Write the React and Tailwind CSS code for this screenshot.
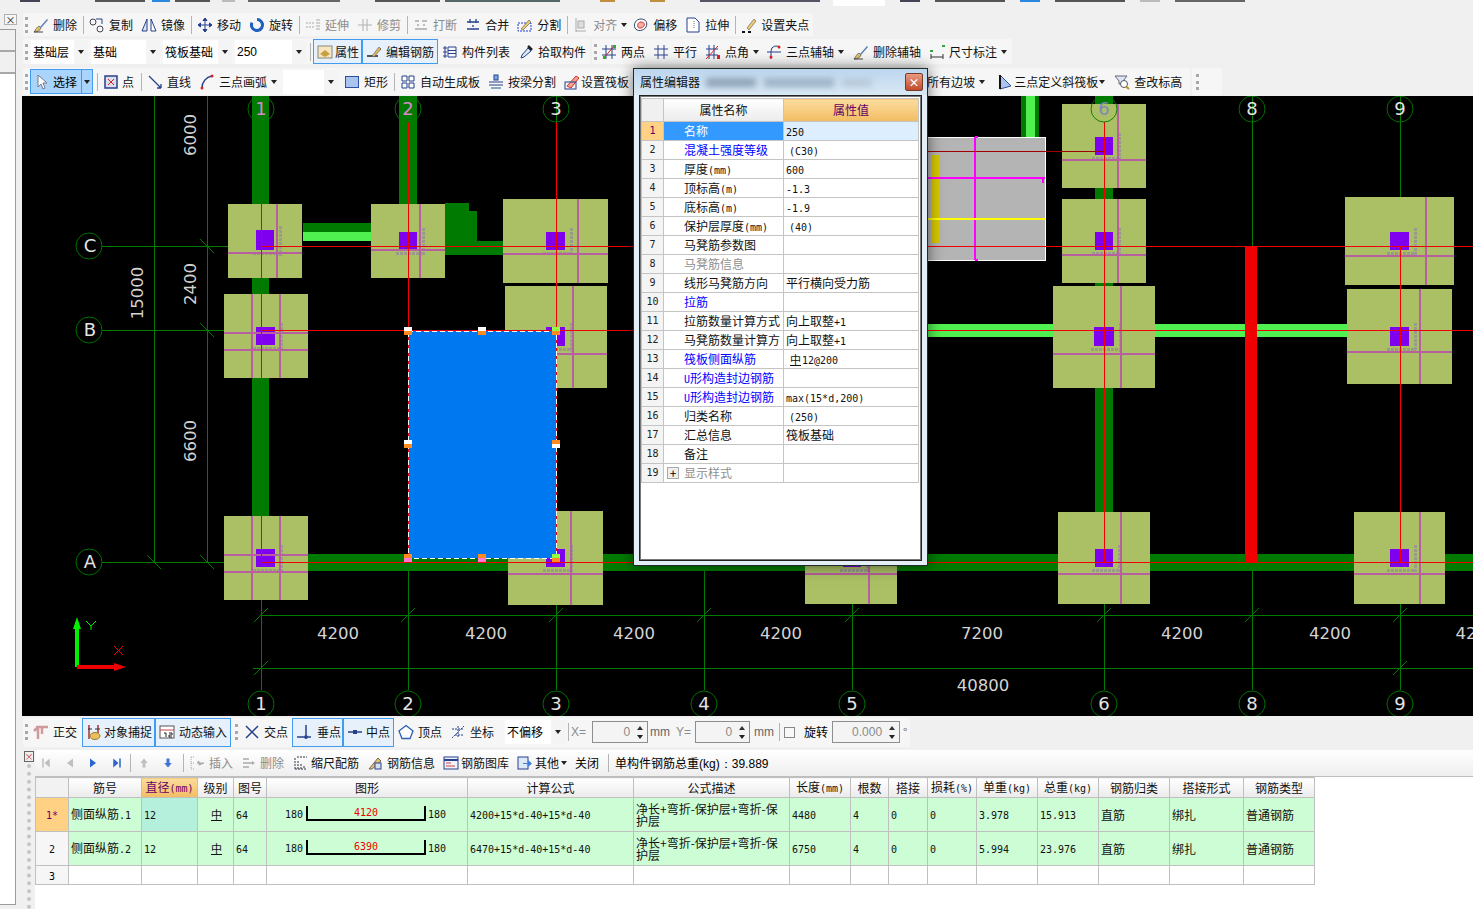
// App.jsx - 筏板基础 绘图界面 + 属性编辑器 + 钢筋表
import { Fragment } from 'react';

const mono = "[font-family:'DejaVu_Sans_Mono',monospace] text-[10px]";
const sans = "[font-family:'Liberation_Sans',sans-serif]";

// 钢筋级别符号
function Rb() {
  return <span className="inline-block text-[11px] leading-[11px] border-b border-[#111] mx-[1px]">中</span>;
}

// ascii 部分用窄的等宽字
function T({ s }) {
  return String(s)
    .split(/([\x00-\x7f]+|⌽)/)
    .map((p, i) => {
      if (p === '⌽') return <Rb key={i} />;
      if (/^[\x00-\x7f]+$/.test(p)) return <span key={i} className={mono}>{p}</span>;
      return <Fragment key={i}>{p}</Fragment>;
    });
}

const B = '#27408b';
const icons = {
  del: <><path d="M1 15c3 0 6-1 7-4L6 9c-2 1-3 3-5 6z" fill="#e0c060" stroke="#555" strokeWidth=".7"/><path d="M7 10 14 2l1 1-7 8z" fill="#5b7cb8"/><path d="M1 15h9" stroke="#444"/></>,
  copy: <><circle cx="4" cy="5" r="3" fill="none" stroke="#445"/><circle cx="11" cy="12" r="3" fill="none" stroke="#445"/><path d="M7 2h6v5" fill="none" stroke={B}/></>,
  mirror: <><path d="M1 14 6 2v12z" fill="#dde6f4" stroke={B}/><path d="M15 14 10 2v12z" fill="#fff" stroke={B}/></>,
  move: <path d="M8 1v14M1 8h14M8 1 6 3.500h4zM8 15l-2-2.500h4zM1 8l2.500-2v4zM15 8l-2.500-2v4z" fill={B} stroke={B}/>,
  rotate: <path d="M8 2.500a5.500 5.500 0 1 1-5 3.200" fill="none" stroke="#1f5fc0" strokeWidth="3"/>,
  extend: <path d="M1 6h8M1 10h8M12 2v12M14 2v12" fill="none" stroke="#aaa" strokeDasharray="2 1"/>,
  trim: <path d="M1 8h14M6 2v12M10 2v12" fill="none" stroke="#b0b0b0"/>,
  breakk: <path d="M2 4h4M9 4h5M2 12h12M5 7v2M11 7v2" fill="none" stroke="#aaa" strokeWidth="1.500"/>,
  merge: <path d="M2 5h12M2 12h12M5 2v4M11 2v4M8 8v2" fill="none" stroke={B} strokeWidth="1.300"/>,
  split: <><rect x="1" y="6" width="13" height="8" fill="none" stroke="#1a3fd0" strokeDasharray="2 1"/><path d="M4 12 12 3l2 2-8 8z" fill="#e8c870" stroke="#555" strokeWidth=".6"/></>,
  align: <><path d="M3 1v14M3 14h10" stroke="#aaa" fill="none"/><rect x="5" y="4" width="6" height="7" fill="#ddd" stroke="#aaa"/></>,
  offset: <><path d="M8 2c5 0 7 4 5 8s-9 5-11 1 1-9 6-9z" fill="#fff" stroke="#346"/><path d="M8 5c3 0 4 2 3 4s-5 3-6 1 0-5 3-5z" fill="#f4b0a0" stroke="#c33"/></>,
  stretch: <><path d="M2 1h8l4 4v10H2z" fill="#fff" stroke={B}/><path d="M9 4v8" stroke="#777" strokeDasharray="1 1"/></>,
  grip: <><path d="M1 15h3M7 15h3" stroke="#111" strokeWidth="2"/><path d="M6 11 13 2l2 2-7 9z" fill="#eecb70" stroke="#555" strokeWidth=".6"/></>,
  prop: <><rect x="1" y="2" width="14" height="12" fill="#f6e6c0" stroke="#887"/><path d="M3 10l5-4 5 4-5 3z" fill="#c9a040"/></>,
  rebar: <><path d="M1 12h11M14 4v2" stroke="#222" strokeWidth="1.500"/><path d="M6 12 13 3l2 2-7 8z" fill="#e0b860" stroke="#555" strokeWidth=".6"/></>,
  list: <path d="M2 3h2v2H2zM2 7h2v2H2zM2 11h2v2H2zM6 3h8v10H6zM6 6.500h8M6 9.500h8" fill="none" stroke={B}/>,
  pick: <><path d="M3 14l1-3 6-7 3 3-7 6z" fill="#d8e8f8" stroke={B}/><path d="M10 2l4 4" stroke="#222" strokeWidth="2.500"/></>,
  two: <><path d="M5 1v14M11 1v14M1 5h14M1 11h14" stroke={B} fill="none"/><path d="M2 15 14 1" stroke="#d22"/><rect x="12" y="1" width="3" height="3" fill="#3a3"/><rect x="2" y="12" width="3" height="3" fill="#3a3"/></>,
  par: <path d="M5 1v14M11 1v14M1 5h14M1 11h14" stroke="#33468f" fill="none"/>,
  ang: <><path d="M4 1v14M9 1v14M1 5h12M1 11h12" stroke={B} fill="none"/><path d="M1 15 13 2" stroke="#d22"/><rect x="12" y="11" width="3" height="4" fill="#d22"/></>,
  arc3: <><path d="M5 15V7a5 5 0 0 1 9-3M1 8h14" stroke={B} fill="none"/><circle cx="5" cy="13" r="1.500" fill="#d22"/><circle cx="13" cy="3" r="1.500" fill="#d22"/></>,
  dim: <><path d="M2 13h12M2 10v5M14 10v5" stroke="#333" fill="none"/><rect x="1" y="6" width="3" height="2" fill="#3a3"/><rect x="13" y="1" width="3" height="2" fill="#3a3"/></>,
  cursor: <path d="M4 1v12l3-3 2 5 2-1-2-5h4z" fill="#fff" stroke="#778"/>,
  point: <><rect x="2" y="2" width="12" height="12" fill="#dde" stroke={B} strokeWidth="1.500"/><path d="M5 5l6 6M11 5l-6 6" stroke="#c22"/></>,
  line: <path d="M2 2l12 12M14 14v-4M14 14h-4" stroke={B} strokeWidth="1.300" fill="none"/>,
  arc: <><path d="M3 14C3 8 7 3 13 2" stroke={B} strokeWidth="1.500" fill="none"/><circle cx="3" cy="14" r="1.500" fill="#d22"/><circle cx="13" cy="2" r="1.500" fill="#d22"/></>,
  rect: <rect x="1.500" y="2.500" width="13" height="11" fill="#a9c4ee" stroke="#2d4f9f"/>,
  auto: <path d="M2 2h5v5H2zM9 2h5v5H9zM2 9h5v5H2zM9 9h5v5H9z" fill="#fff" stroke={B}/>,
  beam: <><rect x="6" y="1" width="4" height="5" fill="#7aa8e8" stroke={B}/><path d="M1 8h14M1 11h14" stroke={B}/><rect x="3" y="13" width="10" height="2" fill="#8ab"/></>,
  slab: <><path d="M3 12 12 2l3 2-8 10z" fill="#f4a090" stroke="#c33"/><rect x="1" y="8" width="11" height="7" fill="none" stroke={B}/></>,
  slope: <><path d="M3 1v14l11-3z" fill="#a9c4ee" stroke="#2d4f9f"/><path d="M3 1v14" stroke="#111" strokeWidth="2"/></>,
  elev: <><path d="M1 2h12l-4 5v3H5V7z" fill="#dde6f4" stroke="#667"/><circle cx="10" cy="10" r="3.500" fill="#fff" stroke="#556"/><path d="M12 12.500l3 2.500" stroke="#b8902a" strokeWidth="2"/></>,
  ortho: <path d="M3 3h12M5 3v12M9 3v7M1 7l4-4" stroke="#d09a9a" strokeWidth="2.500" fill="none"/>,
  snap: <><path d="M3 1v14M12 1v8" stroke="#a33" strokeWidth="1.500"/><path d="M2 5h4M9 5h5" stroke="#333"/><ellipse cx="9" cy="12" rx="5" ry="3.500" fill="#e8c060" stroke="#a07a20"/></>,
  dyn: <><rect x="1" y="2" width="14" height="12" fill="#fff" stroke="#555"/><path d="M1 6h14" stroke="#c44"/><path d="M5 9h2v4M10 9h3v2h-3v2h3" stroke="#222" fill="none"/></>,
  cross: <path d="M2 2l12 12M14 2 2 14" stroke={B} strokeWidth="1.500"/>,
  perp: <><path d="M1 13h14" stroke={B} strokeWidth="1.500"/><path d="M10 1v14" stroke={B} strokeWidth="1.500"/><rect x="8.500" y="11.500" width="3" height="3" fill={B}/></>,
  mid: <><path d="M1 8h14" stroke={B} strokeWidth="1.500"/><rect x="6" y="6" width="4" height="4" fill={B}/></>,
  vertex: <path d="M8 1.500 15 7l-3 7.500H4L1 7z" fill="#fff" stroke="#2d5fb0" strokeWidth="1.300"/>,
  coord: <path d="M8 2v12M2 14l6-6 6-6M2 5h12M5 11h8" stroke={B} strokeDasharray="2 1" fill="none"/>,
  ins: <><path d="M2 2h3M2 8h3M2 14h3M2 2v12" stroke="#aaa" strokeDasharray="1 1" fill="none"/><path d="M15 8H8l2-2v4z" fill="#aaa" stroke="#aaa"/></>,
  rm: <><path d="M2 4h6M2 12h6M2 8h9" stroke="#aaa" strokeWidth="1.500"/><path d="M14 8l-3-2v4z" fill="#aaa"/></>,
  scale: <path d="M2 3v11M5 6v8M8 9v5M11 11v3M2 14h11M4 2h10" stroke="#334" fill="none" strokeDasharray="2 1"/>,
  info: <><path d="M2 14 11 3l3 3-9 8z" fill="#e8c070" stroke="#765"/><rect x="8" y="8" width="6" height="6" fill="#d6e2f4" stroke={B}/></>,
  lib: <><rect x="1" y="2" width="14" height="12" fill="#eef2fa" stroke={B}/><path d="M1 5h14" stroke={B} strokeWidth="2"/><path d="M3 8h5M3 11h9" stroke="#c44"/></>,
  other: <><rect x="1" y="2" width="10" height="12" fill="#dfe8f6" stroke={B}/><path d="M6 8h5V5l4 3.500-4 3.500V9H6z" fill="#3f80d8"/></>,
};

function Icon({ name, className = 'w-4 h-4' }) {
  return (
    <svg viewBox="0 0 16 16" className={`${className} shrink-0`}>
      {icons[name]}
    </svg>
  );
}

function Caret({ className = '' }) {
  return <span className={`inline-block w-0 h-0 border-x-[3px] border-t-[4px] border-x-transparent border-t-[#222] shrink-0 ${className}`}></span>;
}

function Grip({ className = '' }) {
  return <span className={`block w-0 h-[16px] border-l-[3px] border-dotted border-[#a8a8a8] shrink-0 ${className}`}></span>;
}

function Sep({ className = 'ml-[2px] mr-[1px]' }) {
  return <span className={`block w-px h-[18px] bg-[#b4b4b4] shrink-0 ${className}`}></span>;
}

function Tool({ icon, label, off, active, caret, gap = 'gap-[4px]', className = '' }) {
  return (
    <div
      className={`flex items-center h-full shrink-0 whitespace-nowrap ${gap} ${
        active ? 'border border-[#3f9cf0] bg-[#e6f1fb] px-[3px] h-[23px]' : caret ? 'pl-[4px] pr-px' : 'px-[4px]'
      } ${off ? 'text-[#8c8c8c]' : 'text-[#111]'} ${className}`}
    >
      {icon && <Icon name={icon} />}
      <span>{label}</span>
      {caret && <Caret />}
    </div>
  );
}

function Combo({ label, className }) {
  return (
    <div className={`flex items-center justify-between h-[24px] bg-white pl-[2px] shrink-0 ${className}`}>
      <span className="whitespace-nowrap">{label}</span>
      <span className="flex items-center justify-center w-[14px] h-full bg-[#f4f4f4]"><Caret /></span>
    </div>
  );
}

function Bar({ className = '', children }) {
  return <div className={`flex items-center h-full bg-[#f6f6f6] rounded-[2px] shrink-0 ${className}`}>{children}</div>;
}

function Spin({ value, className }) {
  return (
    <div className={`flex items-center justify-end h-[22px] border border-[#8e8e8e] bg-[#f4f4f4] shrink-0 text-[#8a8a8a] ${className}`}>
      <span className={sans}>{value}</span>
      <span className="flex flex-col items-center justify-center gap-[5px] w-[14px] ml-[3px]">
        <span className="block w-0 h-0 border-x-[3px] border-b-[4px] border-x-transparent border-b-[#333]"></span>
        <Caret />
      </span>
    </div>
  );
}

const PADS = [
  { x: 228, y: 204, w: 74, h: 74, px: 256, py: 230, pw: 18, ph: 20, hl: [253], vl: [277] },
  { x: 224, y: 294, w: 84, h: 84, px: 256, py: 327, pw: 19, ph: 18, hl: [333, 350], vl: [252, 280] },
  { x: 224, y: 516, w: 84, h: 84, px: 256, py: 549, pw: 19, ph: 18, hl: [555, 572], vl: [252, 280] },
  { x: 371, y: 204, w: 74, h: 74, px: 399, py: 232, pw: 18, ph: 18, hl: [250], vl: [420] },
  { x: 503, y: 199, w: 105, h: 84, px: 546, py: 232, pw: 19, ph: 18, hl: [254], vl: [578] },
  { x: 505, y: 286, w: 102, h: 102, px: 546, py: 327, pw: 19, ph: 19, hl: [354], vl: [573] },
  { x: 508, y: 511, w: 95, h: 94, px: 546, py: 549, pw: 19, ph: 18, hl: [574], vl: [571] },
  { x: 805, y: 515, w: 92, h: 89, px: 843, py: 549, pw: 18, ph: 18, hl: [574], vl: [869] },
  { x: 1062, y: 104, w: 84, h: 84, px: 1095, py: 137, pw: 18, ph: 18, hl: [160], vl: [1118] },
  { x: 1062, y: 199, w: 84, h: 84, px: 1095, py: 232, pw: 18, ph: 18, hl: [255], vl: [1118] },
  { x: 1053, y: 286, w: 102, h: 102, px: 1094, py: 327, pw: 20, ph: 19, hl: [354], vl: [1121] },
  { x: 1058, y: 512, w: 92, h: 92, px: 1095, py: 549, pw: 18, ph: 18, hl: [574], vl: [1121] },
  { x: 1345, y: 197, w: 109, h: 88, px: 1390, py: 232, pw: 19, ph: 18, hl: [256], vl: [1426] },
  { x: 1347, y: 289, w: 105, h: 95, px: 1390, py: 327, pw: 19, ph: 19, hl: [352], vl: [1420] },
  { x: 1354, y: 512, w: 91, h: 92, px: 1390, py: 549, pw: 19, ph: 18, hl: [574], vl: [1420] },
];

const HANDLES = [
  [404, 327, '#fff', '#ff8a20'], [478, 327, '#fff', '#ff8a20'], [552, 327, '#90ff40', '#ff8a20'],
  [404, 440, '#fff', '#ff8a20'], [552, 440, '#ff8a20', '#fff'],
  [404, 554, '#ff8a20', '#ff78d8'], [478, 554, '#ff8a20', '#ff78d8'], [552, 554, '#90ff40', '#ff8a20'],
];

const DIM_X = [[338, '4200'], [486, '4200'], [634, '4200'], [781, '4200'], [982, '7200'], [1182, '4200'], [1330, '4200'], [1466, '42']];
const DIM_Y = [[135, '6000'], [284, '2400'], [441, '6600']];
const AXES = [[261, '1'], [408, '2'], [556, '3'], [704, '4'], [852, '5'], [1104, '6'], [1252, '8'], [1400, '9']];
const ROWS_Y = [[246, 'C'], [330, 'B'], [562, 'A']];

function Canvas() {
  const G = '#007a00';
  const dim = { fill: '#d4d4d4', fontFamily: "'DejaVu Sans',sans-serif", fontSize: 16.5, textAnchor: 'middle' };
  const bubble = { fill: '#e4e4e4', fontFamily: "'DejaVu Sans',sans-serif", fontSize: 18, textAnchor: 'middle' };
  return (
    <svg viewBox="22 96 1451 620" className="block w-[1451px] h-[620px] bg-black">
      <g shapeRendering="crispEdges">
        {/* 梁 */}
        <g fill="#007a00">
          <rect x="252" y="96" width="17" height="466" />
          <rect x="399" y="96" width="18" height="110" />
          <rect x="1095" y="96" width="18" height="460" />
          <rect x="261" y="554" width="1212" height="17" />
          <rect x="303" y="223" width="68" height="9" />
          <path d="M445 203h24v8h8v30h28v14h-60z" />
          <rect x="1021" y="96" width="18" height="56" />
        </g>
        <rect x="303" y="232" width="68" height="9" fill="#50f050" />
        <rect x="1026" y="96" width="9" height="56" fill="#50f050" />
        <rect x="928" y="324" width="420" height="13" fill="#50f050" />
        {/* 筏板 灰色 */}
        <rect x="925" y="137" width="120" height="123" fill="#b4b4b4" stroke="#fff" />
        <rect x="932" y="155" width="7" height="88" fill="#d6c800" />
        <path d="M928 178h117M975 137v123M1043 178v5M975 137h3M975 260h3" stroke="#ff00ff" strokeWidth="2" fill="none" />
        <path d="M928 219h117" stroke="#ffff00" strokeWidth="2" fill="none" />
        {/* 轴线 */}
        <g stroke={G} fill="none">
          <path d="M154 96v466M207 96v466M102 246h159M102 330h159M102 562h159" />
          {AXES.map(([x]) => <path key={x} d={`M${x} 96v594`} />)}
          <path d="M261 615h1212M253 668h1220" />
          {[246, 330, 562].map((y) => <path key={y} d={`M200 ${y - 7}l14 14`} />)}
          <path d="M147 555l14 14" />
          {AXES.map(([x]) => <path key={x} d={`M${x - 7} 622l14-14`} />)}
          <path d="M254 675l14-14M1393 675l14-14" />
        </g>
        <rect x="1245" y="246" width="12" height="316" fill="#f00000" />
        {/* 独立基础 */}
        {PADS.map((p, i) => (
          <g key={i}>
            <rect x={p.x} y={p.y} width={p.w} height={p.h} fill="#abc064" />
            <rect x={p.px} y={p.py} width={p.pw} height={p.ph} fill="#7f00ef" />
            <path
              d={`M${p.px - 3} ${p.py + p.ph + 3}h${p.pw + 10}M${p.px + p.pw + 6} ${p.py - 4}v${p.ph + 10}`}
              stroke="#9a9a8c"
              strokeWidth="3"
              strokeDasharray="3 1"
              fill="none"
            />
            {p.hl.map((y) => <rect key={y} x={p.x} y={y - 1} width={p.w} height="2" fill="#b85fa2" />)}
            {p.vl.map((x) => <rect key={x} x={x - 1} y={p.y} width="2" height={p.h} fill="#b85fa2" />)}
          </g>
        ))}
        {/* 选中的板 */}
        <rect x="408" y="331" width="148" height="227" fill="#0078f0" />
        {/* 红色定位线 */}
        <g stroke="#f00000" fill="none">
          <path d="M261 122v440M408 122v440M556 122v440M1104 122v440M1400 246v316" />
          <path d="M261 246h1212M261 330h1212M261 562h1212" />
          <path d="M928 151h176" stroke="#a00000" />
        </g>
        <rect x="408" y="331" width="148" height="227" fill="none" stroke="#fff" strokeDasharray="5 3" />
        {HANDLES.map(([x, y, a, b], i) => (
          <g key={i}>
            <rect x={x} y={y} width="8" height="4" fill={a} />
            <rect x={x} y={y + 4} width="8" height="4" fill={b} />
          </g>
        ))}
      </g>
      {/* 轴号 */}
      <g fill="none" stroke={G} strokeWidth="0.9">
        {ROWS_Y.map(([y]) => <circle key={y} cx="89" cy={y} r="13" />)}
        {AXES.map(([x]) => <circle key={x} cx={x} cy="704" r="13" />)}
        {AXES.filter(([x]) => x !== 704 && x !== 852).map(([x]) => <circle key={x} cx={x} cy="109" r="13" />)}
      </g>
      {ROWS_Y.map(([y, t]) => <text key={t} x="90" y={y + 6} {...bubble}>{t}</text>)}
      {AXES.map(([x, t]) => <text key={x} x={x} y="710" {...bubble}>{t}</text>)}
      {AXES.filter(([x]) => x !== 704 && x !== 852).map(([x, t]) => (
        <text key={x} x={x} y="115" {...bubble} fill={x === 261 || x === 408 ? '#d889c8' : x === 1104 ? '#7f88b8' : '#e4e4e4'}>{t}</text>
      ))}
      {/* 尺寸 */}
      {DIM_X.map(([x, t]) => <text key={x} x={x} y="639" {...dim}>{t}</text>)}
      <text x="983" y="691" {...dim}>40800</text>
      {DIM_Y.map(([y, t]) => <text key={y} transform={`translate(196 ${y}) rotate(-90)`} {...dim}>{t}</text>)}
      <text transform="translate(143 293) rotate(-90)" {...dim}>15000</text>
      {/* 坐标系 */}
      <path d="M77 667V622" stroke="#00f000" strokeWidth="4" />
      <path d="M77 617l-4 12h8z" fill="#00f000" />
      <path d="M77 667h42" stroke="#f00000" strokeWidth="4" />
      <path d="M126 667l-12-4v8z" fill="#f00000" />
      <path d="M86 621l5 5 5-5M91 626v4" stroke="#00f000" fill="none" />
      <path d="M114 646l9 9M123 646l-9 9" stroke="#f00000" fill="none" />
    </svg>
  );
}

const PROPS = [
  ['名称', '250'],
  ['混凝土强度等级', '(C30)', 'b', true],
  ['厚度(mm)', '600'],
  ['顶标高(m)', '-1.3'],
  ['底标高(m)', '-1.9'],
  ['保护层厚度(mm)', '(40)', '', true],
  ['马凳筋参数图', ''],
  ['马凳筋信息', '', 'g'],
  ['线形马凳筋方向', '平行横向受力筋'],
  ['拉筋', '', 'b'],
  ['拉筋数量计算方式', '向上取整+1'],
  ['马凳筋数量计算方', '向上取整+1'],
  ['筏板侧面纵筋', '⌽12@200', 'b', true],
  ['U形构造封边钢筋', '', 'b'],
  ['U形构造封边钢筋', 'max(15*d,200)', 'b'],
  ['归类名称', '(250)', '', true],
  ['汇总信息', '筏板基础'],
  ['备注', ''],
  ['显示样式', '', 'g'],
];

function PropDialog() {
  return (
    <div className="absolute left-[633px] top-[68px] w-[295px] h-[498px] flex flex-col border border-[#1c2c2c] bg-[#e4eef6] shadow-[0_0_14px_rgba(0,0,0,0.55)]">
      {/* 标题栏 */}
      <div className="flex items-center h-[26px] pl-[6px] pr-[4px] shrink-0 bg-gradient-to-b from-[#bcd6ee] to-[#d9e8f4]">
        <span className="text-[#111] whitespace-nowrap">属性编辑器</span>
        <span className="block w-[50px] h-[9px] ml-[6px] bg-[#8fa3b6] blur-[3px]"></span>
        <span className="block w-[70px] h-[9px] ml-[8px] bg-[#9db2c6] blur-[3px]"></span>
        <span className="block w-[30px] h-[7px] ml-[8px] bg-[#b4c6d6] blur-[3px]"></span>
        <span className="ml-auto flex items-center justify-center w-[18px] h-[18px] rounded-[2px] border border-[#7a3a2a] bg-gradient-to-b from-[#e89a80] to-[#c04a2a] text-white text-[11px] font-bold leading-none">×</span>
      </div>
      {/* 内容 */}
      <div className="flex-1 mx-[5px] mb-[4px] border border-[#222] bg-white min-h-0">
        <div className="w-full h-full border border-[#777] bg-white pt-px">
          <table className="table-fixed border-collapse w-[277px]">
            <colgroup>
              <col className="w-[22px]" />
              <col className="w-[120px]" />
              <col className="w-[135px]" />
            </colgroup>
            <thead>
              <tr className="h-[23px]">
                <th className="border border-[#c4c4c4] bg-[#f0f0f0]"></th>
                <th className="border border-[#c4c4c4] bg-gradient-to-b from-white to-[#ebebeb] font-normal text-[#111]">属性名称</th>
                <th className="border border-[#c4c4c4] bg-gradient-to-b from-[#fbdc9c] to-[#f2bd62] font-normal text-[#660066]">属性值</th>
              </tr>
            </thead>
            <tbody>
              {PROPS.map(([name, val, kind, inset], i) => (
                <tr key={i}>
                  <td className={`border border-[#c4c4c4] p-0 ${i === 0 ? 'bg-[#ffd184] text-[#660066]' : 'bg-[#f4f4f4] text-[#222]'}`}>
                    <div className={`flex items-center justify-center h-[18px] ${mono}`}>{i + 1}</div>
                  </td>
                  <td
                    className={`border border-[#c4c4c4] p-0 ${
                      i === 0 ? 'bg-[#3399ff] text-white' : kind === 'b' ? 'text-[#0000ff]' : kind === 'g' ? 'text-[#8f8f8f]' : 'text-[#111]'
                    }`}
                  >
                    <div className="relative flex items-center h-[18px] pl-[20px] whitespace-nowrap overflow-hidden">
                      {i === 18 && (
                        <span className="absolute left-[3px] top-[3px] flex items-center justify-center w-[12px] h-[12px] border border-[#aaa] bg-[#eee] text-black text-[12px] leading-none">+</span>
                      )}
                      <span><T s={name} /></span>
                    </div>
                  </td>
                  <td className={`border border-[#c4c4c4] p-0 text-[#111] ${i === 0 ? 'bg-[#ddeeff]' : ''}`}>
                    <div className={`flex items-center h-[18px] whitespace-nowrap overflow-hidden ${inset ? 'pl-[5px]' : 'pl-[2px]'}`}>
                      <span><T s={val} /></span>
                    </div>
                  </td>
                </tr>
              ))}
            </tbody>
          </table>
        </div>
      </div>
    </div>
  );
}

const HEAD = ['筋号', '直径(mm)', '级别', '图号', '图形', '计算公式', '公式描述', '长度(mm)', '根数', '搭接', '损耗(%)', '单重(kg)', '总重(kg)', '钢筋归类', '搭接形式', '钢筋类型'];
const COLS = ['w-[33px]', 'w-[73px]', 'w-[56px]', 'w-[36px]', 'w-[33px]', 'w-[201px]', 'w-[166px]', 'w-[156px]', 'w-[61px]', 'w-[38px]', 'w-[39px]', 'w-[49px]', 'w-[61px]', 'w-[61px]', 'w-[71px]', 'w-[74px]', 'w-[71px]'];
const BARS = [
  { no: '1*', name: '侧面纵筋.1', d: '12', mid: '4120', f: '4200+15*d-40+15*d-40', len: '4480', one: '3.978', all: '15.913' },
  { no: '2', name: '侧面纵筋.2', d: '12', mid: '6390', f: '6470+15*d-40+15*d-40', len: '6750', one: '5.994', all: '23.976' },
];

function RebarTable() {
  const cell = 'border border-[#c0c0c0] p-0 pl-[2px] overflow-hidden';
  return (
    <table className="table-fixed border-collapse w-[1279px]">
      <colgroup>
        {COLS.map((c, i) => <col key={i} className={c} />)}
      </colgroup>
      <thead>
        <tr className="h-[20px]">
          <th className="border border-[#c0c0c0] bg-[#f2f2f2]"></th>
          {HEAD.map((h, i) => (
            <th
              key={i}
              className={`border border-[#c0c0c0] p-0 font-normal whitespace-nowrap overflow-hidden ${
                i === 1 ? 'bg-gradient-to-b from-[#fbdc9c] to-[#f2bd62] text-[#660066]' : 'bg-gradient-to-b from-white to-[#ebebeb] text-[#111]'
              }`}
            >
              <T s={h} />
            </th>
          ))}
        </tr>
      </thead>
      <tbody>
        {BARS.map((b, i) => (
          <tr key={b.no} className="h-[34px] bg-[#ccfdd4] text-[#111]">
            <td className={`border border-[#c0c0c0] p-0 text-center ${i === 0 ? 'bg-[#ffd184] text-[#660066]' : 'bg-[#f6f6f6]'}`}>
              <span className={mono}>{b.no}</span>
            </td>
            <td className={`${cell} whitespace-nowrap`}><T s={b.name} /></td>
            <td className={`${cell} border-l-black ${i === 0 ? 'bg-[#b4f0dc]' : ''}`}><T s={b.d} /></td>
            <td className={`${cell} text-center`}><Rb /></td>
            <td className={cell}><T s="64" /></td>
            <td className={cell}>
              <div className="flex items-center pl-[16px]">
                <span className={`${mono} w-[21px]`}>180</span>
                <div className="flex justify-center items-end w-[120px] h-[15px] mb-[2px] border-x-2 border-b-2 border-black">
                  <span className={`${mono} text-[#f00000] leading-[12px]`}>{b.mid}</span>
                </div>
                <span className={`${mono} ml-[2px]`}>180</span>
              </div>
            </td>
            <td className={cell}><T s={b.f} /></td>
            <td className={`${cell} leading-[12px]`}>净长+弯折-保护层+弯折-保护层</td>
            <td className={cell}><T s={b.len} /></td>
            <td className={cell}><T s="4" /></td>
            <td className={cell}><T s="0" /></td>
            <td className={cell}><T s="0" /></td>
            <td className={cell}><T s={b.one} /></td>
            <td className={cell}><T s={b.all} /></td>
            <td className={cell}>直筋</td>
            <td className={cell}>绑扎</td>
            <td className={cell}>普通钢筋</td>
          </tr>
        ))}
        <tr className="h-[19px]">
          <td className="border border-[#c0c0c0] p-0 text-center bg-[#f6f6f6]"><span className={mono}>3</span></td>
          {HEAD.map((h, i) => <td key={i} className={`border border-[#c0c0c0] p-0 ${i === 1 ? 'border-l-black' : ''}`}></td>)}
        </tr>
      </tbody>
    </table>
  );
}

const NavBtn = ({ d, color }) => (
  <svg viewBox="0 0 16 16" className="w-[12px] h-[14px] shrink-0"><path d={d} fill={color} /></svg>
);

// 顶部被裁掉的一行,只露出字的底部
const CLIPPED = [
  ['ml-[20px] w-[20px]', 'bg-[#445]'],
  ['ml-[55px] w-[50px]', 'bg-[#555]'],
  ['ml-[7px] w-[18px]', 'bg-[#2a88e0]'],
  ['ml-[5px] w-[35px]', 'bg-[#555]'],
  ['ml-[12px] w-[13px]', 'bg-[#bbb]'],
  ['ml-[13px] w-[92px]', 'bg-[#666]'],
  ['ml-[35px] w-[65px]', 'bg-[#555]'],
  ['ml-[5px] w-[115px]', 'bg-[#566]'],
  ['ml-[40px] w-[15px]', 'bg-[#c09040]'],
  ['ml-[35px] w-[15px]', 'bg-[#c09040]'],
  ['ml-[35px] w-[120px]', 'bg-[#556]'],
];

export default function App() {
  return (
    <div className="w-[1473px] h-[909px] relative overflow-hidden flex flex-col bg-[#f0f0f0] text-[12px] leading-none [font-family:'Noto_Sans_CJK_SC','Liberation_Sans',sans-serif]">
      {/* 顶部 */}
      <div className="flex items-start h-[13px] shrink-0">
        {CLIPPED.map(([w, c], i) => (
          <span key={i} className={`block h-[2px] shrink-0 ${w} ${c}`}></span>
        ))}
        <span className="block w-[52px] h-[6px] ml-[13px] bg-white shrink-0"></span>
        {CLIPPED.slice(0, 6).map(([w, c], i) => (
          <span key={i} className={`block h-[2px] shrink-0 ml-[15px] ${i % 2 ? 'w-[70px]' : 'w-[20px]'} ${c}`}></span>
        ))}
      </div>

      <div className="flex flex-1 min-h-0">
        {/* 左侧折叠面板 */}
        <div className="w-[22px] shrink-0 flex flex-col">
          <div className="flex items-center justify-center w-[13px] h-[11px] ml-[4px] mt-[1px] border border-[#b0b0b0] bg-[#f6f6f6] text-[#222] text-[10px]">×</div>
          <div className="flex-1 w-[16px] mt-[4px] mb-[4px] flex flex-col border border-l-0 border-[#9c9c9c] bg-[#f0f0f0]">
            <div className="h-[22px] border-b-2 border-[#a8a8a8]"></div>
            <div className="h-[22px] border-b-2 border-[#a8a8a8]"></div>
            <div className="flex-1 bg-white"></div>
          </div>
        </div>

        <div className="flex-1 min-w-0 flex flex-col">
          {/* 第一行 */}
          <div className="flex h-[23px] pl-px shrink-0">
            <Bar>
              <Grip className="ml-[2px] mr-px" />
              <Tool icon="del" label="删除" />
              <Sep />
              <Tool icon="copy" label="复制" />
              <Tool icon="mirror" label="镜像" />
              <Sep />
              <Tool icon="move" label="移动" />
              <Tool icon="rotate" label="旋转" />
              <Sep />
              <Tool icon="extend" label="延伸" off />
              <Tool icon="trim" label="修剪" off />
              <Sep />
              <Tool icon="breakk" label="打断" off />
              <Tool icon="merge" label="合并" />
              <Tool icon="split" label="分割" />
              <Sep />
              <Tool icon="align" label="对齐" off caret />
              <Tool icon="offset" label="偏移" className="ml-px" />
              <Tool icon="stretch" label="拉伸" />
              <Sep />
              <Tool icon="grip" label="设置夹点" />
            </Bar>
          </div>

          {/* 第二行 */}
          <div className="flex h-[25px] mt-[3px] pl-px gap-[2px] shrink-0">
            <Bar className="w-[567px]">
              <Grip className="ml-[2px] mr-[3px]" />
              <Combo label="基础层" className="w-[57px] mr-[3px]" />
              <Combo label="基础" className="w-[69px] mr-[3px]" />
              <Combo label="筏板基础" className="w-[69px] mr-[3px]" />
              <Combo label={<span className={sans}>250</span>} className="w-[71px]" />
              <Sep className="ml-[4px] mr-[2px]" />
              <Tool icon="prop" label="属性" active gap="gap-[2px]" className="w-[49px]" />
              <Tool icon="rebar" label="编辑钢筋" active className="w-[76px]" />
              <Tool icon="list" label="构件列表" />
              <Tool icon="pick" label="拾取构件" />
            </Bar>
            <Bar className="w-[420px]">
              <Grip className="ml-[2px]" />
              <Tool icon="two" label="两点" />
              <Tool icon="par" label="平行" />
              <Tool icon="ang" label="点角" caret />
              <Tool icon="arc3" label="三点辅轴" caret className="ml-[2px]" />
              <Tool icon="del" label="删除辅轴" className="ml-[4px]" />
              <Tool icon="dim" label="尺寸标注" caret />
            </Bar>
          </div>

          {/* 第三行 */}
          <div className="flex h-[27px] mt-[4px] pl-px gap-[2px] shrink-0">
            <Bar className="w-[1167px]">
              <Grip className="ml-[2px] mr-[2px]" />
              <div className="flex items-center h-[25px] w-[63px] border border-[#3f9cf0] bg-[#a9d4fb] shrink-0">
                <Icon name="cursor" className="w-4 h-4 ml-[3px]" />
                <span className="ml-[3px] w-[24px] text-center">选择</span>
                <span className="flex items-center justify-center w-[11px] h-full ml-auto border-l border-[#3f9cf0]"><Caret /></span>
              </div>
              <Sep className="ml-[4px] mr-px" />
              <Tool icon="point" label="点" gap="gap-[3px]" />
              <Sep className="ml-[3px] mr-px" />
              <Tool icon="line" label="直线" />
              <Tool icon="arc" label="三点画弧" caret />
              <Combo label="" className="w-[55px] ml-[5px]" />
              <Tool icon="rect" label="矩形" className="ml-[2px]" />
              <Sep className="ml-[2px] mr-px" />
              <Tool icon="auto" label="自动生成板" />
              <Tool icon="beam" label="按梁分割" />
              <Tool icon="slab" label="设置筏板" gap="gap-px" />
              <Tool label="所有边坡" caret className="ml-[290px]" />
              <Tool icon="slope" label="三点定义斜筏板" caret gap="gap-px" className="ml-[7px]" />
              <Tool icon="elev" label="查改标高" className="ml-[4px]" />
            </Bar>
            <Bar className="w-[30px]">
              <Grip className="ml-[4px]" />
            </Bar>
          </div>

          {/* 绘图区 */}
          <div className="mt-[1px] shrink-0">
            <Canvas />
          </div>

          {/* 捕捉工具条 */}
          <div className="flex items-center h-[29px] pl-px shrink-0">
            <Bar className="h-[26px] mt-[3px] w-[887px]">
              <Grip className="ml-[2px] mr-px" />
              <Tool icon="ortho" label="正交" className="mr-px" />
              <Tool icon="snap" label="对象捕捉" active gap="gap-[2px]" className="w-[73px]" />
              <Tool icon="dyn" label="动态输入" active className="w-[76px]" />
              <Grip className="ml-[4px] mr-[2px]" />
              <Tool icon="cross" label="交点" />
              <Tool icon="perp" label="垂点" active gap="gap-[5px]" className="w-[51px]" />
              <Tool icon="mid" label="中点" active gap="gap-[3px]" className="w-[51px]" />
              <Tool icon="vertex" label="顶点" />
              <Tool icon="coord" label="坐标" />
              <Combo label="不偏移" className="w-[60px] ml-[7px]" />
              <Sep className="ml-[3px] mr-[2px]" />
              <span className={`text-[#8a8a8a] w-[20px] shrink-0 ${sans}`}>X=</span>
              <Spin value="0" className="w-[56px] ml-px" />
              <span className={`ml-[2px] w-[26px] shrink-0 text-[#666] ${sans}`}>mm</span>
              <span className={`w-[19px] shrink-0 text-[#8a8a8a] ${sans}`}>Y=</span>
              <Spin value="0" className="w-[55px]" />
              <span className={`ml-[4px] w-[24px] shrink-0 text-[#666] ${sans}`}>mm</span>
              <Sep className="ml-px mr-[4px]" />
              <span className="block w-[11px] h-[11px] border border-[#888] bg-[#f8f8f8] shrink-0"></span>
              <span className="ml-[9px] shrink-0 whitespace-nowrap">旋转</span>
              <Spin value="0.000" className="w-[68px] ml-[4px]" />
              <span className="ml-[3px] text-[#666]">°</span>
            </Bar>
          </div>

          {/* 钢筋表 */}
          <div className="flex mt-[5px] flex-1 min-h-0 pl-px">
            <div className="w-[12px] shrink-0 flex flex-col items-center">
              <span className="flex items-center justify-center w-[10px] h-[11px] border border-[#666] bg-[#eee] text-[9px] text-[#c33] mt-px">×</span>
              <span className="block flex-1 w-0 mt-[2px] border-l-4 border-dotted border-[#c4c4c4]"></span>
            </div>
            <div className="flex-1 min-w-0 flex flex-col bg-white">
              <div className="flex items-center h-[27px] bg-gradient-to-b from-white to-[#eeeeee] shrink-0 border-b border-[#bdbdbd] pl-[5px]">
                <NavBtn d="M3 2h2v12H3zM13 2v12L6 8z" color="#bfbfbf" />
                <span className="w-[12px]"></span>
                <NavBtn d="M12 2v12L4 8z" color="#bfbfbf" />
                <span className="w-[11px]"></span>
                <NavBtn d="M4 2v12l8-6z" color="#2b66d0" />
                <span className="w-[12px]"></span>
                <NavBtn d="M3 2v12l7-6zM11 2h2v12h-2z" color="#2b66d0" />
                <Sep className="ml-[7px] mr-[7px]" />
                <NavBtn d="M8 2l5 6h-3v6H6V8H3z" color="#bfbfbf" />
                <span className="w-[12px]"></span>
                <NavBtn d="M8 14l5-6h-3V2H6v6H3z" color="#3f74d8" />
                <Sep className="ml-[9px] mr-px" />
                <Tool icon="ins" label="插入" off />
                <Tool icon="rm" label="删除" off gap="gap-[3px]" className="w-[52px]" />
                <Tool icon="scale" label="缩尺配筋" gap="gap-[2px]" />
                <Tool icon="info" label="钢筋信息" />
                <Tool icon="lib" label="钢筋图库" gap="gap-[2px]" />
                <Tool icon="other" label="其他" caret gap="gap-[2px]" />
                <span className="ml-[7px] shrink-0">关闭</span>
                <Sep className="ml-[9px] mr-[6px]" />
                <span className="whitespace-nowrap">单构件钢筋总重<span className={sans}>(kg)：39.889</span></span>
              </div>
              <RebarTable />
            </div>
          </div>
        </div>
      </div>

      <PropDialog />
    </div>
  );
}
